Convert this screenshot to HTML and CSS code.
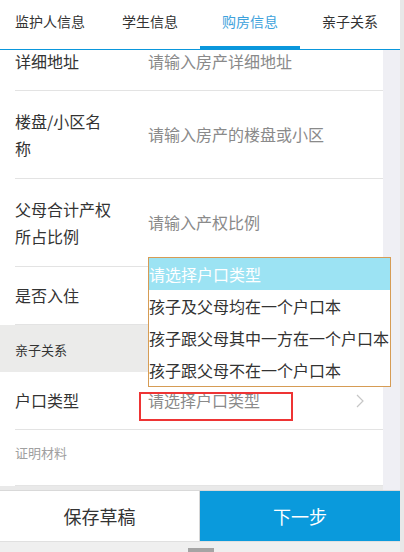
FILE: index.html
```html
<!DOCTYPE html>
<html lang="zh-CN">
<head>
<meta charset="utf-8">
<title>购房信息</title>
<link rel="stylesheet" href="styles.css">
</head>
<body>
<div class="app">
  <nav class="tabs">
    <div class="tab">监护人信息</div>
    <div class="tab">学生信息</div>
    <div class="tab active">购房信息</div>
    <div class="tab">亲子关系</div>
  </nav>
  <main class="content">
    <div class="form">
      <div class="row first">
        <div class="label">详细地址</div>
        <div class="value">请输入房产详细地址</div>
      </div>
      <div class="row tall">
        <div class="label">楼盘/小区名<br>称</div>
        <div class="value">请输入房产的楼盘或小区</div>
      </div>
      <div class="row tall">
        <div class="label">父母合计产权<br>所占比例</div>
        <div class="value">请输入产权比例</div>
      </div>
      <div class="row">
        <div class="label">是否入住</div>
        <div class="value"></div>
      </div>
      <div class="section">亲子关系</div>
      <div class="row">
        <div class="label">户口类型</div>
        <div class="value select">
          <span>请选择户口类型</span>
          <svg class="chevron" width="8" height="14" viewBox="0 0 8 14"><polyline points="1,1 7,7 1,13" fill="none" stroke="#c6c6c6" stroke-width="1.2"/></svg>
        </div>
        <span class="highlight-box"></span>
      </div>
      <div class="note">证明材料</div>
    </div>
    <div class="track"></div>
  </main>
  <footer class="actions">
    <button class="btn draft">保存草稿</button>
    <button class="btn next">下一步</button>
  </footer>
  <div class="bottom-strip"><span class="thumb"></span></div>
  <ul class="dropdown">
    <li class="selected">请选择户口类型</li>
    <li>孩子及父母均在一个户口本</li>
    <li>孩子跟父母其中一方在一个户口本</li>
    <li>孩子跟父母不在一个户口本</li>
  </ul>
</div>
</body>
</html>
```
FILE: styles.css
```css
* { box-sizing: border-box; }
html, body { margin: 0; padding: 0; }
body {
  background: #e8e8e8;
  font-family: "Noto Sans CJK SC", "Noto Sans", sans-serif;
  color: #333;
}
.app {
  position: relative;
  width: 400px;
  height: 552px;
  display: flex;
  flex-direction: column;
  overflow: hidden;
}
.tabs {
  display: grid;
  grid-template-columns: repeat(4, 100px);
  height: 50px;
  flex: none;
  background: #fff;
  border-bottom: 1px solid #0a97dc;
}
.tab {
  font-size: 14px;
  text-align: center;
  line-height: 43px;
  color: #333;
}
.tab.active {
  color: #3ea2dc;
  border-bottom: 3px solid #0a97dc;
}
.content {
  height: 440px;
  flex: none;
  display: grid;
  grid-template-columns: 383px 17px;
  background: #e9e9e9;
  overflow: hidden;
}
.track { background: #efeff4; }
.form {
  background: #fff;
  align-self: start;
}
.row {
  position: relative;
  display: flex;
  align-items: center;
  height: 58px;
  padding: 0;
  margin-left: 15px;
  border-bottom: 1px solid #e3e3e3;
  font-size: 16px;
  line-height: 27px;
}
.row.tall { height: 88px; }
.row.first { margin-top: -17px; }
.label {
  width: 133px;
  color: #333;
}
.value {
  flex: 1;
  color: #8a8a8a;
}
.select {
  display: flex;
  align-items: center;
}
.highlight-box {
  position: absolute;
  left: 124px;
  top: 20px;
  width: 154px;
  height: 29px;
  border: 2px solid #ee3434;
}
.chevron {
  margin-left: auto;
  margin-right: 19px;
}
.section {
  height: 47px;
  background: #ebebea;
  padding-left: 15px;
  font-size: 13px;
  line-height: 50px;
  color: #333;
}
.note {
  height: 56px;
  margin-left: 15px;
  padding-top: 13px;
  font-size: 13px;
  line-height: 20px;
  color: #a0a0a0;
  border-bottom: 1px solid #e4e4e4;
}
.actions {
  display: grid;
  grid-template-columns: 200px 200px;
  height: 52px;
  flex: none;
  border-top: 1px solid #d9d9d9;
  border-bottom: 1px solid #e0e0e0;
}
.btn {
  border: 0;
  margin: 0;
  font-family: inherit;
  font-size: 18px;
  padding: 0;
}
.draft {
  background: #fff;
  color: #333;
  border-right: 1px solid #d6d6d6;
}
.next {
  background: #0a9adc;
  color: #fff;
}
.bottom-strip {
  flex: 1;
  background: #efefef;
  position: relative;
}
.thumb {
  position: absolute;
  left: 188px;
  bottom: 0;
  width: 26px;
  height: 4px;
  background: #a4a4a4;
}
.dropdown {
  position: absolute;
  left: 148px;
  top: 257px;
  width: 243px;
  margin: 0;
  padding: 0;
  list-style: none;
  background: #fff;
  border: 1px solid #d69c55;
}
.dropdown li {
  height: 32px;
  line-height: 32px;
  font-size: 16px;
  color: #333;
  white-space: nowrap;
  padding-left: 0;
}
.dropdown li.selected {
  background: #9ce3f3;
  color: #fff;
}
```
